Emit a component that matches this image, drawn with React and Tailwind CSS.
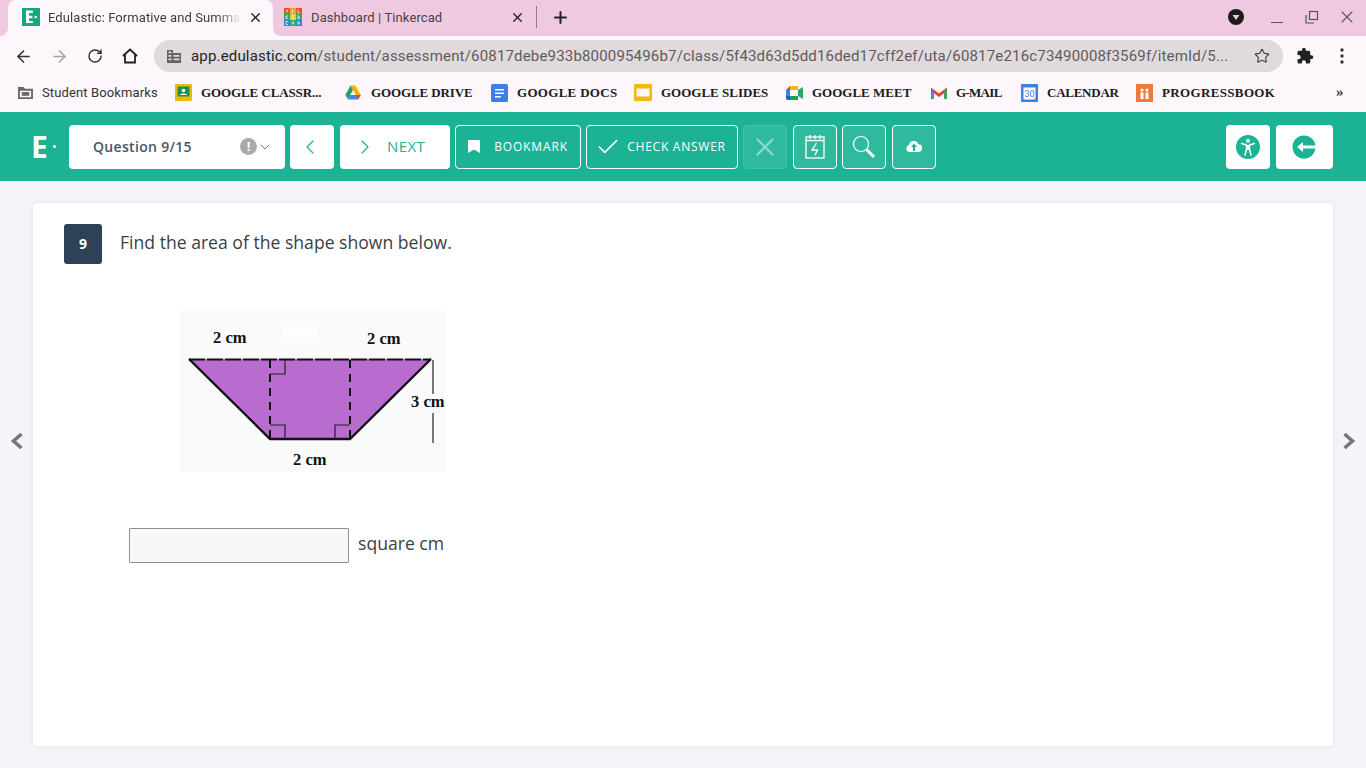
import React from "react";
import { ArrowLeft, ArrowRight, RotateCw, Star, X, Plus, Check, ChevronLeft, ChevronRight, ChevronDown } from "lucide-react";

const roboto = "font-['Roboto',sans-serif]";
const serifB = "font-['Liberation_Serif',serif] font-bold";

function Gdrive() {
  return (
    <svg width="16" height="15" viewBox="0 0 16 15" className="shrink-0">
      <path d="M5.500 .5h5l5.200 9.500h-5z" fill="#f4b400" />
      <path d="M5.500 0.500L0.300 10l2.500 4.300L8 5z" fill="#1fa463" />
      <path d="M5 10h10.700l-2.500 4.500H2.800z" fill="#4285f4" />
      <path d="M10.700 10h5L13.200 14.500z" fill="#ea4335" />
    </svg>
  );
}

function Bm({ icon, text, w, track = "tracking-[0px]", gap = "gap-[9px]" }) {
  return (
    <div className={`flex items-center ${gap} shrink-0`} style={{ width: w }}>
      {icon}
      <span className={`${serifB} text-[13px] ${track} text-[#1c1c1c] whitespace-nowrap`}>{text}</span>
    </div>
  );
}

function Corner({ side }) {
  return (
    <div className="w-2 h-9 bg-[#fdf6fb] shrink-0">
      <div className={`w-2 h-9 bg-[#efc9e0] ${side === "left" ? "rounded-br-lg" : "rounded-bl-lg"}`} />
    </div>
  );
}

function TabStrip() {
  return (
    <div className="h-9 bg-[#efc9e0] flex items-stretch">
      <Corner side="left" />
      <div className="w-[265px] h-9 bg-[#fdf6fb] rounded-t-lg flex items-center pl-[14px] pr-[10px] pb-px shrink-0">
        <svg width="18" height="18" viewBox="0 0 18 18" className="shrink-0 mb-px">
          <rect width="18" height="18" fill="#19a77f" />
          <path d="M4 2.500h6.800v2.600H7v2.600h3.400v2.500H7v2.700h3.800V15H4z" fill="#fff" />
          <rect x="12.500" y="8" width="2.300" height="2" fill="#fff" />
        </svg>
        <span className={`${roboto} text-[13px] text-[#3c3c3c] ml-2 w-[193px] whitespace-nowrap tracking-[0.08px] [mask-image:linear-gradient(to_right,#000_88%,transparent)]`}>
          Edulastic: Formative and Summa
        </span>
        <X size={15} strokeWidth={2.200} className="text-[#222] ml-auto mb-px" />
      </div>
      <Corner side="right" />
      <div className="w-[255px] h-9 flex items-center pl-[3px] pr-[11px] pb-px shrink-0">
        <svg width="18" height="18" viewBox="0 0 18 18" className="shrink-0 mb-px">
          <rect x="0" y="0" width="18" height="6" fill="#e2582d" />
          <rect x="6" y="0" width="6" height="6" fill="#e9a33c" />
          <rect x="0" y="6" width="18" height="6" fill="#2fa66a" />
          <rect x="6" y="6" width="6" height="6" fill="#e9c53c" />
          <rect x="0" y="12" width="18" height="6" fill="#2f8bd0" />
          <rect x="6" y="12" width="6" height="6" fill="#2fa66a" />
          <path d="M2 2.500h2M3 2.500v2M8.500 1.500v3.500M14 1.500v3.500h2M2 7.500v3.500M2 9l2-1.500M2 9l2 2M8 7.500h2M8 9.300h2M8 11h2M14 7.500v3.500M14 7.500l2 2-2 1.500M4 13.500H2v3h2M8 16.500l1-3 1 3M14 13.500v3l2-1.500z" stroke="#fff" strokeWidth="0.700" fill="none" />
        </svg>
        <span className={`${roboto} text-[13px] text-[#444] ml-[9px] tracking-[0.1px]`}>Dashboard | Tinkercad</span>
        <X size={15} strokeWidth={2.200} className="text-[#222] ml-auto mb-px" />
      </div>
      <div className="w-px h-[22px] bg-[#8d7d88] mt-[6px] shrink-0" />
      <Plus size={19} strokeWidth={2.600} className="text-[#222] ml-[14px] mt-[8px] shrink-0" />
      <div className="ml-auto flex items-center h-9 pb-[2px] text-[#555] shrink-0">
        <svg width="16" height="16" viewBox="0 0 16 16" className="mr-[27px]">
          <circle cx="8" cy="8" r="8" fill="#1d1a1c" />
          <path d="M4.500 6h7L8 11z" fill="#efc9e0" />
        </svg>
        <div className="w-[12px] h-[1.500px] bg-[#555] mr-[21px] mt-[11px]" />
        <svg width="15" height="15" viewBox="0 0 15 15" className="mr-[18px]" fill="none" stroke="#555" strokeWidth="1.200">
          <rect x="5.500" y="1.500" width="8" height="8" />
          <path d="M2 5v8h8" />
        </svg>
        <X size={20} strokeWidth={1.300} className="mr-[9px]" />
      </div>
    </div>
  );
}

function Toolbar() {
  return (
    <div className="h-10 bg-[#fdf6fb] flex items-center">
      <ArrowLeft size={19} strokeWidth={2} className="ml-[14px] text-[#333] shrink-0" />
      <ArrowRight size={19} strokeWidth={2} className="ml-[17px] text-[#a9a3a7] shrink-0" />
      <RotateCw size={16} strokeWidth={2.200} className="ml-[18px] text-[#333] shrink-0" />
      <svg width="18" height="18" viewBox="0 0 18 18" fill="none" stroke="#222" strokeWidth="1.800" className="ml-[18px] shrink-0">
        <path d="M2 9l7-6.500L16 9M4 8v7.500h10V8" />
      </svg>
      <div className="ml-[15px] w-[1129px] h-8 rounded-full bg-[#e0dadd] flex items-center pl-[12px] pr-[13px] shrink-0">
        <svg width="16" height="15" viewBox="0 0 16 15" fill="#66615f" className="shrink-0">
          <path d="M1 1h6v3h8v10H1zM2.500 2.500v1.700H5.500V2.500zM2.500 6v1.700H5.500V6zM2.500 9.500v1.700H5.500V9.500zM7.500 6v1.700h6V6zM7.500 9.500v1.700h6V9.500z" fillRule="evenodd" />
        </svg>
        <span className={`${roboto} text-[15px] ml-[9px] whitespace-nowrap tracking-[0.175px] text-[#5f5a5d]`}>
          <span className="text-[#1f1f1f]">app.edulastic.com</span>/student/assessment/60817debe933b800095496b7/class/5f43d63d5dd16ded17cff2ef/uta/60817e216c73490008f3569f/itemId/5...
        </span>
        <Star size={16} strokeWidth={1.700} className="ml-auto text-[#444] shrink-0" />
      </div>
      <svg width="18" height="18" viewBox="0 0 24 24" fill="#222" className="ml-[13px] shrink-0">
        <path d="M20.500 11H19V7a2 2 0 0 0-2-2h-4V3.500a2.500 2.500 0 0 0-5 0V5H4a2 2 0 0 0-2 2v3.800h1.500a2.700 2.700 0 0 1 0 5.400H2V20a2 2 0 0 0 2 2h3.800v-1.500a2.700 2.700 0 0 1 5.400 0V22H17a2 2 0 0 0 2-2v-4h1.500a2.500 2.500 0 0 0 0-5z" />
      </svg>
      <svg width="4" height="16" viewBox="0 0 4 16" fill="#333" className="ml-[26px] shrink-0">
        <circle cx="2" cy="2" r="1.700" /><circle cx="2" cy="8" r="1.700" /><circle cx="2" cy="14" r="1.700" />
      </svg>
    </div>
  );
}

function Bookmarks() {
  return (
    <div className="h-9 bg-[#fdf6fb] flex items-center pl-[18px] pb-[3px]">
      <div className="flex items-center shrink-0 w-[157px]">
        <svg width="15" height="14" viewBox="0 0 16 15" fill="#6b6669" className="shrink-0">
          <path d="M0 1h6l1.500 2H16v11H0zM2 5v7h12V5z" fillRule="evenodd" />
          <rect x="4" y="6.500" width="8" height="4" />
        </svg>
        <span className={`${roboto} text-[13px] ml-[9px] text-[#333] tracking-[0.12px] whitespace-nowrap`}>Student Bookmarks</span>
      </div>
      <Bm w="170px" track="tracking-[-0.1px]" text="GOOGLE CLASSR..." icon={
        <svg width="17" height="17" viewBox="0 0 17 17" className="shrink-0">
          <rect width="17" height="17" rx="1" fill="#f2b90c" />
          <rect x="2.500" y="2.500" width="12" height="10" fill="#1f8f4e" />
          <circle cx="8.500" cy="6.500" r="1.800" fill="#fff" />
          <path d="M5 11c.500-2 6.500-2 7 0z" fill="#fff" />
        </svg>} />
      <Bm w="146px" track="tracking-[-0.12px]" gap="gap-[10px]" text="GOOGLE DRIVE" icon={<Gdrive />} />
      <Bm w="143px" track="tracking-[0.3px]" text="GOOGLE DOCS" icon={
        <svg width="17" height="18" viewBox="0 0 17 18" className="shrink-0">
          <rect width="17" height="18" rx="1.500" fill="#3f7ee8" />
          <path d="M4 5h9v1.500H4zM4 8.500h9V10H4zM4 12h6v1.500H4z" fill="#fff" />
        </svg>} />
      <Bm w="152px" track="tracking-[0px]" text="GOOGLE SLIDES" icon={
        <svg width="18" height="17" viewBox="0 0 18 17" className="shrink-0">
          <rect width="18" height="17" rx="1.500" fill="#f2b90c" />
          <rect x="2.500" y="4.500" width="13" height="8" fill="#fdf6fb" />
        </svg>} />
      <Bm w="145px" track="tracking-[0px]" text="GOOGLE MEET" icon={
        <svg width="17" height="14" viewBox="0 0 17 14" className="shrink-0">
          <path d="M4 0h8v4H4z" fill="#f2b90c" />
          <path d="M0 4h4v6H0z" fill="#3f7ee8" />
          <path d="M4 0L0 4h4z" fill="#ea4335" />
          <path d="M0 10h4v4H2a2 2 0 0 1-2-2z" fill="#1a5fc8" />
          <path d="M4 10h8v4H4z" fill="#1f9e5a" />
          <path d="M12 4v6l5 3V1z" fill="#2aa862" />
          <path d="M12 1v3H4z" fill="#f2b90c" />
        </svg>} />
      <Bm w="90px" track="tracking-[-0.7px]" text="G-MAIL" icon={
        <svg width="16" height="13" viewBox="0 0 16 13" className="shrink-0">
          <path d="M0 1.500L8 7.500l8-6V5L8 11 0 5z" fill="#ea4335" />
          <path d="M0 3v10h3V5.500z" fill="#4285f4" />
          <path d="M16 3v10h-3V5.500z" fill="#34a853" />
        </svg>} />
      <Bm w="115px" track="tracking-[-0.25px]" text="CALENDAR" icon={
        <svg width="17" height="18" viewBox="0 0 17 18" className="shrink-0">
          <rect width="17" height="18" rx="1" fill="#3f7ee8" />
          <rect x="2.500" y="3.500" width="12" height="12" fill="#fff" />
          <path d="M12 15.500l2.500-3v3z" fill="#f2b90c" />
          <text x="8.500" y="13" fontSize="9" textAnchor="middle" fill="#3f7ee8" fontFamily="Roboto">30</text>
        </svg>} />
      <Bm w="170px" track="tracking-[0.35px]" gap="gap-[9px]" text="PROGRESSBOOK" icon={
        <svg width="17" height="18" viewBox="0 0 17 18" className="shrink-0">
          <rect width="17" height="18" fill="#ee7a3e" />
          <circle cx="6" cy="6" r="1.600" fill="#fff" /><circle cx="11" cy="6" r="1.600" fill="#fff" />
          <path d="M4.500 8.500h3V15h-3zM9.500 8.500h3V15h-3z" fill="#fff" />
        </svg>} />
      <span className="ml-[30px] text-[15px] text-[#333] font-['Liberation_Serif',serif] font-bold">»</span>
    </div>
  );
}

function NavBtn({ children, className = "", dim }) {
  return (
    <div className={`h-11 rounded-[4px] flex items-center justify-center shrink-0 border ${dim ? "border-[#3ec3a8] bg-[#2fba9e]" : "border-white"} ${className}`}>
      {children}
    </div>
  );
}

function WhiteBtn({ children, className = "" }) {
  return <div className={`h-11 rounded-[4px] bg-white flex items-center justify-center shrink-0 ${className}`}>{children}</div>;
}

function NavBar() {
  return (
    <div className="h-[69px] bg-[#1cb294] flex items-center pl-[31px] pr-[33px] font-['Open_Sans',sans-serif]">
      <span className="text-[30px] leading-none font-bold text-white shrink-0 w-[17px]">E</span>
      <span className="w-[3px] h-[3px] rounded-full bg-white ml-[5px] shrink-0" />
      <WhiteBtn className="ml-[13px] w-[216px] justify-start pl-[24px] pr-[12px]">
        <span className="text-[14px] font-semibold text-[#4a5568] tracking-[0.32px]">Question 9/15</span>
        <span className="ml-auto w-[17px] h-[17px] rounded-full bg-[#a9a9a9] text-white text-[13px] font-bold leading-none flex items-center justify-center">!</span>
        <ChevronDown size={16} strokeWidth={1.300} className="text-[#5f6b7a]" />
      </WhiteBtn>
      <WhiteBtn className="ml-[5px] w-11 pr-[4px]">
        <ChevronLeft size={24} strokeWidth={1.200} className="text-[#1cb294]" />
      </WhiteBtn>
      <WhiteBtn className="ml-[6px] w-[110px] justify-start pl-[13px]">
        <ChevronRight size={24} strokeWidth={1.200} className="text-[#1cb294]" />
        <span className="ml-[10px] text-[15px] tracking-[0.4px] text-[#1cb294]">NEXT</span>
      </WhiteBtn>
      <NavBtn className="ml-[5px] w-[126px]">
        <svg width="12" height="13" viewBox="0 0 12 13" fill="#fff" className="mr-[14px]">
          <path d="M0 0h12v13L6 9.500 0 13z" />
        </svg>
        <span className="text-[12px] font-medium text-white tracking-[0.85px]">BOOKMARK</span>
      </NavBtn>
      <NavBtn className="ml-[5px] w-[152px]">
        <Check size={26} strokeWidth={1.500} className="text-white mr-[6px] ml-[-3px]" />
        <span className="text-[12px] font-medium text-white tracking-[0.75px]">CHECK ANSWER</span>
      </NavBtn>
      <NavBtn dim className="ml-[5px] w-11">
        <X size={30} strokeWidth={1.800} className="text-[#8ddcca]" />
      </NavBtn>
      <NavBtn className="ml-[6px] w-11 bg-[#2fba9e]">
        <svg width="20" height="25" viewBox="0 0 20 25" fill="none" stroke="#fff" strokeWidth="1.300">
          <rect x="1" y="3" width="18" height="21" />
          <path d="M1 6.500h18M5 1v4M10 1v4M15 1v4" />
          <path d="M11.500 9L7 16h5.500L10 21" />
        </svg>
      </NavBtn>
      <NavBtn className="ml-[5px] w-11 bg-[#2fba9e]">
        <svg width="24" height="24" viewBox="0 0 24 24" fill="none" stroke="#fff">
          <circle cx="9" cy="9" r="7.500" strokeWidth="1.200" />
          <path d="M14.500 14.500l7.500 7.500" strokeWidth="3" />
        </svg>
      </NavBtn>
      <NavBtn className="ml-[6px] w-11 bg-[#2fba9e]">
        <svg width="16" height="14" viewBox="0 0 16 14" fill="#fff">
          <path d="M8 1a4 4 0 0 1 4 3.300A3.500 3.500 0 0 1 12.500 12h-9A3.500 3.500 0 0 1 3 5.100 5 5 0 0 1 8 1z" />
          <path d="M8 3.500L5 7h2v4h2V7h2z" fill="#1cb294" />
        </svg>
      </NavBtn>
      <WhiteBtn className="ml-auto w-11">
        <svg width="24" height="24" viewBox="0 0 24 24">
          <circle cx="12" cy="12" r="12" fill="#1cb294" />
          <circle cx="12" cy="5.800" r="2" fill="#fff" />
          <path d="M5.500 8.500l5 1.500v4l-1.500 6M18.500 8.500l-5 1.500v4l1.500 6" stroke="#fff" strokeWidth="1.500" fill="none" strokeLinecap="round" strokeLinejoin="round" />
          <rect x="10.500" y="10" width="3" height="5" fill="#fff" />
        </svg>
      </WhiteBtn>
      <WhiteBtn className="ml-[6px] w-[57px] pr-[2px]">
        <svg width="24" height="24" viewBox="0 0 24 24">
          <circle cx="12" cy="12" r="11.500" fill="#1cb294" />
          <path d="M5 12l6-5v3.600h13v2.800H11V17z" fill="#fff" />
        </svg>
      </WhiteBtn>
    </div>
  );
}

function Diagram() {
  const t = { fontFamily: "'Liberation Serif',serif", fontWeight: 700, fontSize: 16.500, fill: "#111" };
  return (
    <svg width="266" height="161" viewBox="180 311 266 161" className="block bg-[#fafafa] ml-[116px] mt-[47px]">
      <rect x="282" y="322" width="36" height="20" fill="#fdfdfd" rx="6" />
      <polygon points="189,359 431,359 350,439 270,439" fill="#b86cd0" />
      <path d="M189 359L270 439H350L431 359" fill="none" stroke="#111" strokeWidth="2.400" />
      <path d="M189 359.500H431" stroke="#111" strokeWidth="2" strokeDasharray="16 2" fill="none" />
      <path d="M270 360V439M350 360V439" stroke="#111" strokeWidth="2" strokeDasharray="8 6" fill="none" />
      <path d="M285 360V374H270M270 425H285V439M335 439V425H350" stroke="#222" strokeWidth="1.200" fill="none" />
      <path d="M433 360V394M433 413V443" stroke="#222" strokeWidth="1.200" fill="none" />
      <text x="213" y="343" style={t}>2 cm</text>
      <text x="367" y="344" style={t}>2 cm</text>
      <text x="411" y="407" style={t}>3 cm</text>
      <text x="293" y="465" style={t}>2 cm</text>
    </svg>
  );
}

function SideArrow({ children, className = "" }) {
  return <div className={`w-[33px] flex items-center justify-center shrink-0 pb-[68px] ${className}`}>{children}</div>;
}

function Content() {
  return (
    <div className="flex-1 bg-[#f3f5f9] flex pt-[22px] pb-[22px]">
      <SideArrow>
        <svg width="14" height="18" viewBox="0 0 14 18" fill="none" stroke="#777" strokeWidth="3.600">
          <path d="M11.500 2L3.500 9l8 7" />
        </svg>
      </SideArrow>
      <div className="flex-1 bg-white rounded-[4px] shadow-[0_0_6px_rgba(0,0,0,0.08)] pt-[21px] pl-[31px] font-['Open_Sans',sans-serif]">
        <div className="flex items-start">
          <div className="w-[38px] h-[40px] rounded-[3px] bg-[#2f4156] text-white text-[14px] font-bold flex items-center justify-center pb-px">9</div>
          <p className="ml-[18px] text-[17.600px] leading-[37px] text-[#3a3f45]">Find the area of the shape shown below.</p>
        </div>
        <Diagram />
        <div className="flex items-center ml-[65px] mt-[56px]">
          <div className="w-[220px] h-[35px] bg-[#f8f8f8] border border-[#8f8f8f] rounded-[1px]" />
          <span className="ml-[9px] text-[17.600px] leading-[24px] mb-[5px] text-[#3a3f45]">square cm</span>
        </div>
      </div>
      <SideArrow className="pr-[2px]">
        <svg width="14" height="18" viewBox="0 0 14 18" fill="none" stroke="#777" strokeWidth="3.600">
          <path d="M2.500 2l8 7-8 7" />
        </svg>
      </SideArrow>
    </div>
  );
}

export default function App() {
  return (
    <div className="w-[1366px] h-[768px] overflow-hidden flex flex-col">
      <TabStrip />
      <Toolbar />
      <Bookmarks />
      <NavBar />
      <Content />
    </div>
  );
}
